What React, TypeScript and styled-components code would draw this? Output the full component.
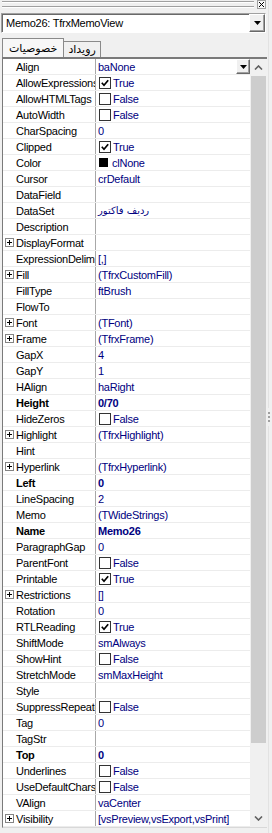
import React from "react";
import styled, { createGlobalStyle } from "styled-components";

const GlobalStyle = createGlobalStyle`
  html, body {
    margin: 0;
    padding: 0;
    background: #f0f0f0;
  }
  body {
    font-family: "Liberation Sans", Arial, sans-serif;
    font-size: 11px;
    letter-spacing: -0.25px;
    color: #000;
  }
`;

type Kind = "text" | "check" | "color";

interface Prop {
  name: string;
  value?: string;
  kind?: Kind;
  checked?: boolean;
  bold?: boolean;
  expand?: boolean;
  selected?: boolean;
  rtl?: boolean;
}

const props: Prop[] = [
  { name: "Align", value: "baNone", selected: true },
  { name: "AllowExpressions", kind: "check", checked: true },
  { name: "AllowHTMLTags", kind: "check" },
  { name: "AutoWidth", kind: "check" },
  { name: "CharSpacing", value: "0" },
  { name: "Clipped", kind: "check", checked: true },
  { name: "Color", kind: "color", value: "clNone" },
  { name: "Cursor", value: "crDefault" },
  { name: "DataField" },
  { name: "DataSet", value: "ردیف فاکتور", rtl: true },
  { name: "Description" },
  { name: "DisplayFormat", expand: true },
  { name: "ExpressionDelimiters", value: "[,]" },
  { name: "Fill", value: "(TfrxCustomFill)", expand: true },
  { name: "FillType", value: "ftBrush" },
  { name: "FlowTo" },
  { name: "Font", value: "(TFont)", expand: true },
  { name: "Frame", value: "(TfrxFrame)", expand: true },
  { name: "GapX", value: "4" },
  { name: "GapY", value: "1" },
  { name: "HAlign", value: "haRight" },
  { name: "Height", value: "0/70", bold: true },
  { name: "HideZeros", kind: "check" },
  { name: "Highlight", value: "(TfrxHighlight)", expand: true },
  { name: "Hint" },
  { name: "Hyperlink", value: "(TfrxHyperlink)", expand: true },
  { name: "Left", value: "0", bold: true },
  { name: "LineSpacing", value: "2" },
  { name: "Memo", value: "(TWideStrings)" },
  { name: "Name", value: "Memo26", bold: true },
  { name: "ParagraphGap", value: "0" },
  { name: "ParentFont", kind: "check" },
  { name: "Printable", kind: "check", checked: true },
  { name: "Restrictions", value: "[]", expand: true },
  { name: "Rotation", value: "0" },
  { name: "RTLReading", kind: "check", checked: true },
  { name: "ShiftMode", value: "smAlways" },
  { name: "ShowHint", kind: "check" },
  { name: "StretchMode", value: "smMaxHeight" },
  { name: "Style" },
  { name: "SuppressRepeated", kind: "check" },
  { name: "Tag", value: "0" },
  { name: "TagStr" },
  { name: "Top", value: "0", bold: true },
  { name: "Underlines", kind: "check" },
  { name: "UseDefaultCharset", kind: "check" },
  { name: "VAlign", value: "vaCenter" },
  { name: "Visibility", value: "[vsPreview,vsExport,vsPrint]", expand: true },
];

const Window = styled.div`
  width: 272px;
  height: 833px;
  display: flex;
  background: #f0f0f0;
  overflow: hidden;
`;

const Main = styled.div`
  width: 267px;
  display: flex;
  flex-direction: column;
`;

const Splitter = styled.div`
  flex: 1;
  display: flex;
  flex-direction: column;
  align-items: flex-start;
  justify-content: center;
  padding-left: 1px;
  .line {
    width: 1px;
    flex: 1;
    background: #e2e2e2;
  }
  .grip {
    display: flex;
    flex-direction: column;
    gap: 2px;
    padding: 4px 0;
    span {
      width: 2px;
      height: 2px;
      background: #a0a0a0;
    }
  }
`;

const TitleBar = styled.div`
  height: 9px;
  display: flex;
  align-items: flex-start;
`;

const GripLines = styled.div`
  flex: 1;
  height: 4px;
  margin: 1px 3px 0 2px;
  border-top: 1px solid #a0a0a0;
  border-bottom: 1px solid #a0a0a0;
  box-shadow: inset 0 1px 0 #fff, 0 1px 0 #fff;
`;

const CloseBtn = styled.div`
  width: 9px;
  height: 9px;
  box-sizing: border-box;
  border: 1px solid #a0a0a0;
  background: #f6f6f6;
  display: flex;
  align-items: center;
  justify-content: center;
  margin-right: 1px;
`;

const Combo = styled.div`
  margin: 4px 1px 0 1px;
  height: 20px;
  box-sizing: border-box;
  display: flex;
  background: #fff;
  border-top: 1px solid #a0a0a0;
  border-left: 1px solid #a0a0a0;
  border-bottom: 1px solid #fff;
  border-right: 1px solid #fff;
  box-shadow: inset 1px 1px 0 #696969;
  .text {
    flex: 1;
    padding-left: 4px;
    line-height: 18px;
    font-size: 11px;
  }
`;

const DropBtn = styled.div<{ $w: number }>`
  width: ${({ $w }) => $w}px;
  box-sizing: border-box;
  background: #f0f0f0;
  border-top: 1px solid #fff;
  border-left: 1px solid #fff;
  border-right: 1px solid #696969;
  border-bottom: 1px solid #696969;
  box-shadow: inset -1px -1px 0 #a0a0a0;
  display: flex;
  align-items: center;
  justify-content: center;
`;

const TabRow = styled.div`
  margin-top: 5px;
  height: 19px;
  padding-left: 2px;
  display: flex;
  align-items: flex-end;
`;

const Tab = styled.div<{ $active?: boolean }>`
  height: ${({ $active }) => ($active ? 19 : 16)}px;
  padding: 0 ${({ $active }) => ($active ? 6 : 4)}px;
  box-sizing: border-box;
  border: 1px solid #8a8a8a;
  border-bottom: none;
  border-left: ${({ $active }) => ($active ? "1px solid #8a8a8a" : "none")};
  background: ${({ $active }) => ($active ? "#f7f7f7" : "#f0f0f0")};
  display: flex;
  align-items: center;
  font-family: "DejaVu Sans", "Liberation Sans", sans-serif;
  font-size: 11px;
  letter-spacing: 0;
  direction: rtl;
`;

const Sheet = styled.div`
  margin-left: 2px;
  display: flex;
  border-top: 2px solid #7a7a7a;
  border-left: 1px solid #7a7a7a;
  border-bottom: 1px solid #d8d8d8;
`;

const Grid = styled.div`
  width: 247px;
  background: #fff;
`;

const Row = styled.div`
  height: 16px;
  box-sizing: border-box;
  display: flex;
  border-bottom: 1px solid #ececec;
`;

const NameCell = styled.div<{ $bold?: boolean }>`
  width: 93px;
  flex: none;
  box-sizing: border-box;
  border-right: 1px solid #a8a8a8;
  display: flex;
  align-items: center;
  overflow: hidden;
  white-space: nowrap;
  font-weight: ${({ $bold }) => ($bold ? 700 : 400)};
`;

const Indent = styled.div`
  width: 13px;
  flex: none;
  display: flex;
  align-items: center;
  padding-left: 2px;
  box-sizing: border-box;
`;

const PlusBox = styled.div`
  width: 9px;
  height: 9px;
  box-sizing: border-box;
  border: 1px solid #848484;
  background: #fff;
  display: flex;
  align-items: center;
  justify-content: center;
`;

const ValueCell = styled.div<{ $bold?: boolean }>`
  flex: 1;
  min-width: 0;
  display: flex;
  align-items: center;
  gap: 2px;
  padding-left: 2px;
  overflow: hidden;
  white-space: nowrap;
  color: #000080;
  font-weight: ${({ $bold }) => ($bold ? 700 : 400)};
  .rtl {
    font-family: "DejaVu Sans", "Liberation Sans", sans-serif;
    font-size: 10px;
    letter-spacing: 0;
  }
`;

const CheckBox = styled.div`
  width: 12px;
  height: 12px;
  margin-left: 1px;
  box-sizing: border-box;
  border: 1px solid #333;
  background: #fff;
  display: flex;
  align-items: center;
  justify-content: center;
`;

const Swatch = styled.div`
  width: 9px;
  height: 9px;
  margin: 0 2px 0 1px;
  background: #000;
`;

const RowDrop = styled(DropBtn)`
  margin-left: auto;
  height: 15px;
`;

const Scrollbar = styled.div`
  width: 17px;
  background: #f0f0f0;
  display: flex;
  flex-direction: column;
`;

const Arrow = styled.div`
  height: 17px;
  display: flex;
  align-items: center;
  justify-content: center;
`;

const Track = styled.div`
  flex: 1;
  padding: 0 1px;
`;

const Thumb = styled.div`
  height: 667px;
  background: #cdcdcd;
`;

const Triangle = () => (
  <svg width="7" height="4" viewBox="0 0 7 4">
    <path d="M0 0h7L3.5 4z" fill="#000" />
  </svg>
);

const Chevron = ({ down }: { down?: boolean }) => (
  <svg width="9" height="5" viewBox="0 0 9 5" style={down ? { transform: "rotate(180deg)" } : undefined}>
    <path d="M1 4.5L4.5 1 8 4.5" fill="none" stroke="#606060" strokeWidth="1.6" />
  </svg>
);

const Tick = () => (
  <svg width="8" height="8" viewBox="0 0 8 8">
    <path d="M0.8 3.8L3 6.2 7.2 1.2" fill="none" stroke="#000" strokeWidth="1.7" />
  </svg>
);

const Plus = () => (
  <svg width="7" height="7" viewBox="0 0 7 7">
    <path d="M1 3.5h5M3.5 1v5" stroke="#000" strokeWidth="1" />
  </svg>
);

function PropRow({ p }: { p: Prop }) {
  return (
    <Row>
      <NameCell $bold={p.bold}>
        <Indent>
          {p.expand && (
            <PlusBox>
              <Plus />
            </PlusBox>
          )}
        </Indent>
        {p.name}
      </NameCell>
      <ValueCell $bold={p.bold}>
        {p.kind === "check" && (
          <>
            <CheckBox>{p.checked && <Tick />}</CheckBox>
            <span>{p.checked ? "True" : "False"}</span>
          </>
        )}
        {p.kind === "color" && (
          <>
            <Swatch />
            <span>{p.value}</span>
          </>
        )}
        {(!p.kind || p.kind === "text") && (
          <span className={p.rtl ? "rtl" : undefined}>{p.value}</span>
        )}
        {p.selected && (
          <RowDrop $w={14}>
            <Triangle />
          </RowDrop>
        )}
      </ValueCell>
    </Row>
  );
}

export default function App() {
  return (
    <>
      <GlobalStyle />
      <Window>
        <Main>
          <TitleBar>
            <GripLines />
            <CloseBtn>
              <svg width="5" height="5" viewBox="0 0 5 5">
                <path d="M0 0l5 5M5 0L0 5" stroke="#000" strokeWidth="1" />
              </svg>
            </CloseBtn>
          </TitleBar>
          <Combo>
            <div className="text">Memo26: TfrxMemoView</div>
            <DropBtn $w={16}>
              <Triangle />
            </DropBtn>
          </Combo>
          <TabRow>
            <Tab $active>خصوصیات</Tab>
            <Tab>رویداد</Tab>
          </TabRow>
          <Sheet>
            <Grid>
              {props.map((p) => (
                <PropRow key={p.name} p={p} />
              ))}
            </Grid>
            <Scrollbar>
              <Arrow>
                <Chevron />
              </Arrow>
              <Track>
                <Thumb />
              </Track>
              <Arrow>
                <Chevron down />
              </Arrow>
            </Scrollbar>
          </Sheet>
        </Main>
        <Splitter>
          <div className="line" />
          <div className="grip">
            <span />
            <span />
            <span />
          </div>
          <div className="line" />
        </Splitter>
      </Window>
    </>
  );
}
